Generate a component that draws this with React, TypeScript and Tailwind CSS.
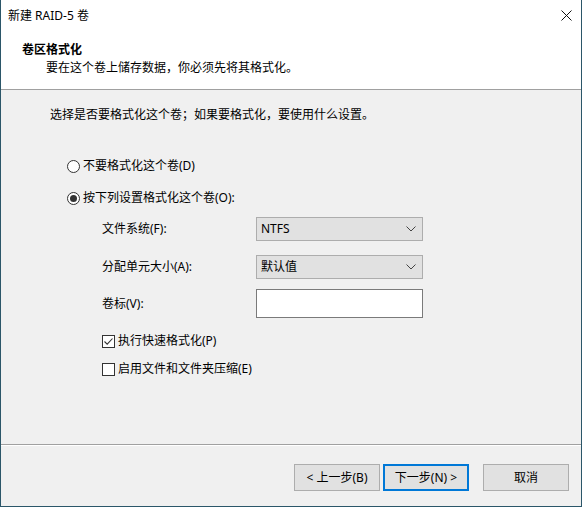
import React from "react";

const Chevron = () => (
  <svg width="10" height="6" viewBox="0 0 10 6" className="shrink-0">
    <path d="M0.5 0.5 L5 5 L9.5 0.5" fill="none" stroke="#444" strokeWidth="1" />
  </svg>
);

const Radio = ({ checked }: { checked?: boolean }) => (
  <span className="w-[13px] h-[13px] rounded-full border border-[#333] bg-white flex items-center justify-center shrink-0">
    {checked && <span className="w-[7px] h-[7px] rounded-full bg-[#333]" />}
  </span>
);

const Check = ({ checked }: { checked?: boolean }) => (
  <span className="w-[13px] h-[13px] border border-[#333] bg-white flex items-center justify-center shrink-0">
    {checked && (
      <svg width="11" height="11" viewBox="0 0 11 11">
        <path d="M1.5 5.5 L4.2 8.2 L9.5 2.5" fill="none" stroke="#333" strokeWidth="1.1" />
      </svg>
    )}
  </span>
);

const Select = ({ value }: { value: string }) => (
  <div className="w-[167px] h-[24px] bg-[#e1e1e1] border border-[#adadad] flex items-center justify-between pl-[4px] pr-[6px]">
    <span>{value}</span>
    <Chevron />
  </div>
);

export default function App() {
  return (
    <div className="w-[582px] h-[507px] flex flex-col border-l border-r border-b border-[#2b5669] bg-[#f0f0f0] text-[12px] leading-[16px] text-black font-['Noto_Sans','Noto_Sans_CJK_SC',sans-serif] overflow-hidden">
      <div className="bg-white h-[89px] shrink-0 flex flex-col">
        <div className="h-[31px] flex items-center justify-between pl-[7px] pr-[9px]">
          <span>新建 RAID-5 卷</span>
          <svg width="11" height="11" viewBox="0 0 11 11">
            <path d="M0.5 0.5 L10.5 10.5 M10.5 0.5 L0.5 10.5" stroke="#111" strokeWidth="1" />
          </svg>
        </div>
        <div className="pl-[21px] pt-[11px] font-bold">卷区格式化</div>
        <div className="pl-[45px] pt-[2px]">要在这个卷上储存数据，你必须先将其格式化。</div>
      </div>
      <div className="h-px bg-[#a0a0a0] shrink-0" />
      <div className="flex-1 flex flex-col">
        <div className="pl-[49px] pt-[17px]">选择是否要格式化这个卷；如果要格式化，要使用什么设置。</div>
        <div className="pl-[66px] mt-[35px] h-[16px] flex items-center gap-[3px]">
          <Radio />
          <span>不要格式化这个卷(D)</span>
        </div>
        <div className="pl-[66px] mt-[16px] h-[16px] flex items-center gap-[3px]">
          <Radio checked />
          <span>按下列设置格式化这个卷(O):</span>
        </div>
        <div className="pl-[101px] mt-[11px] flex items-center">
          <span className="w-[154px]">文件系统(F):</span>
          <Select value="NTFS" />
        </div>
        <div className="pl-[101px] mt-[14px] flex items-center">
          <span className="w-[154px]">分配单元大小(A):</span>
          <Select value="默认值" />
        </div>
        <div className="pl-[101px] mt-[10px] flex items-center">
          <span className="w-[154px]">卷标(V):</span>
          <div className="w-[167px] h-[29px] bg-white border border-[#7a7a7a]" />
        </div>
        <div className="pl-[101px] mt-[15px] h-[16px] flex items-center gap-[3px]">
          <Check checked />
          <span>执行快速格式化(P)</span>
        </div>
        <div className="pl-[101px] mt-[12px] h-[16px] flex items-center gap-[3px]">
          <Check />
          <span>启用文件和文件夹压缩(E)</span>
        </div>
      </div>
      <div className="h-px bg-[#a0a0a0] shrink-0" />
      <div className="h-px bg-white shrink-0" />
      <div className="h-[60px] shrink-0 flex items-start pt-[18px] pl-[293px]">
        <div className="w-[86px] h-[27px] bg-[#e1e1e1] border border-[#adadad] flex items-center justify-center">&lt; 上一步(B)</div>
        <div className="ml-[3px] w-[86px] h-[27px] bg-[#e1e1e1] border-2 border-[#0078d7] flex items-center justify-center">下一步(N) &gt;</div>
        <div className="ml-[14px] w-[86px] h-[27px] bg-[#e1e1e1] border border-[#adadad] flex items-center justify-center">取消</div>
      </div>
    </div>
  );
}
